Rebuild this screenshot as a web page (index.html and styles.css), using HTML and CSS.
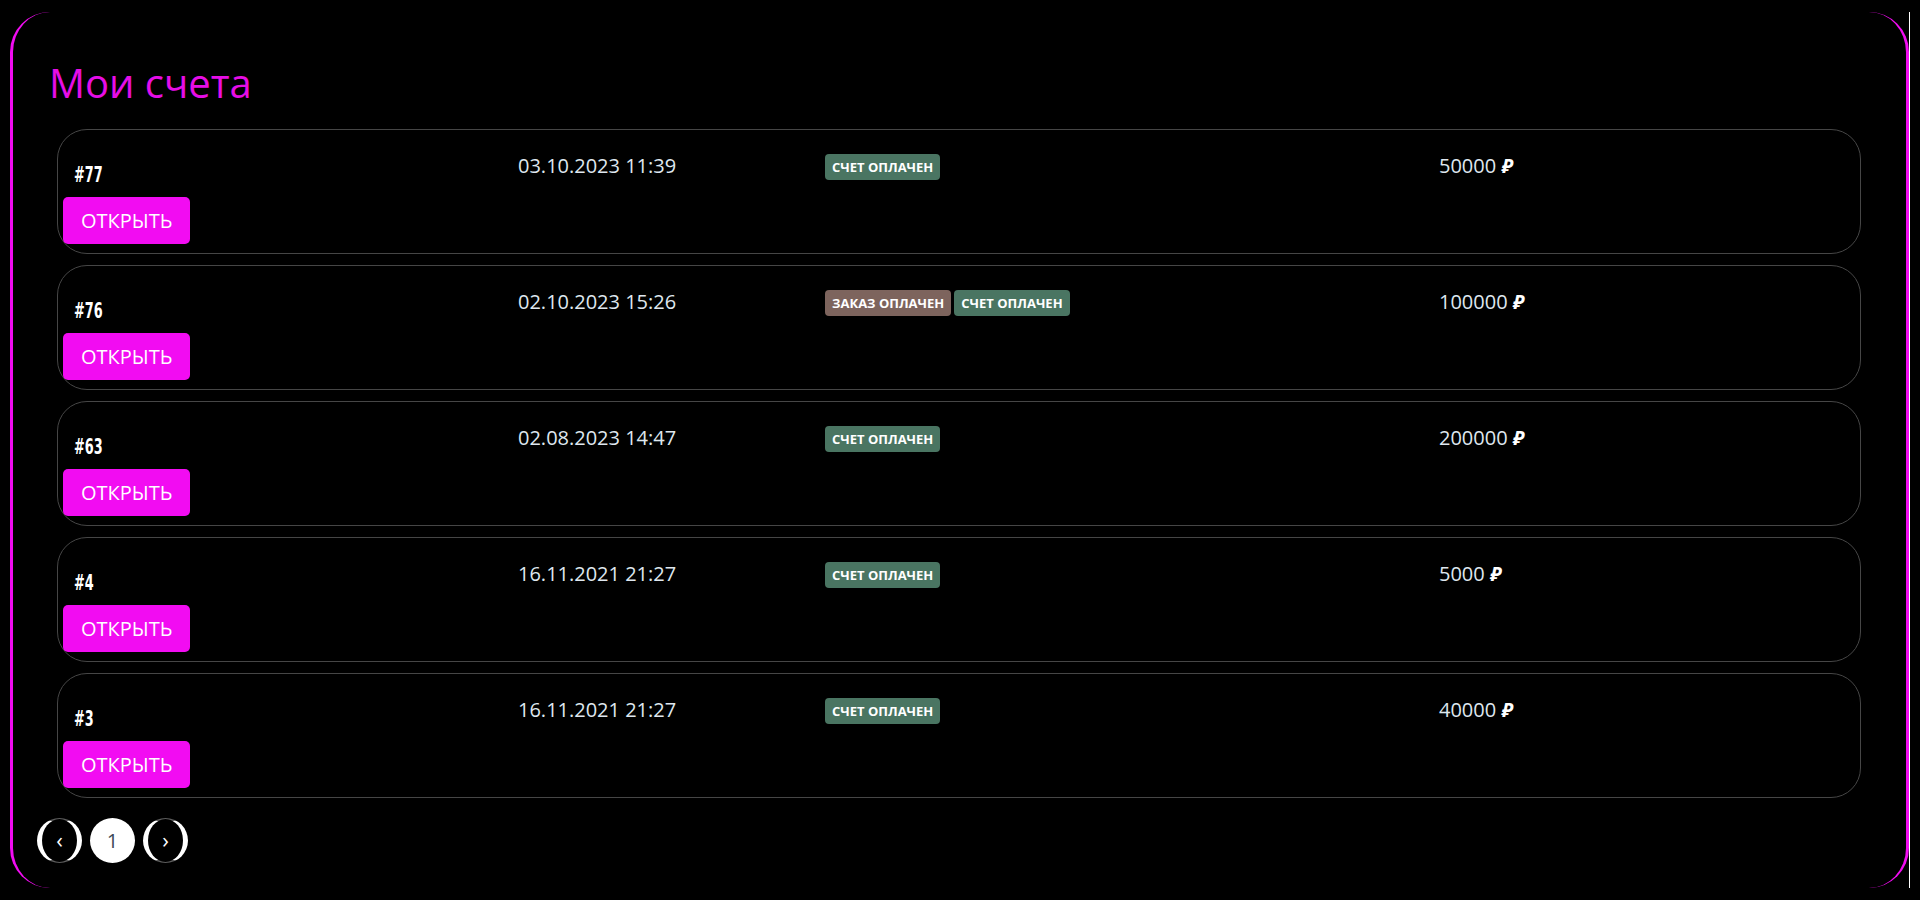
FILE: index.html
```html
<!DOCTYPE html>
<html lang="ru">
<head>
<meta charset="utf-8">
<title>Мои счета</title>
<link rel="stylesheet" href="styles.css">
</head>
<body>
<div class="frame">
  <section class="panel">
    <h1 class="title">Мои счета</h1>
    <div class="list">
      <div class="card">
        <div class="col-id"><div class="num">#77</div><a class="btn-open" href="#">ОТКРЫТЬ</a></div>
        <div class="col-date">03.10.2023 11:39</div>
        <div class="col-badges"><span class="badge badge-green">СЧЕТ ОПЛАЧЕН</span></div>
        <div class="col-sum">50000 <span class="rub">₽</span></div>
      </div>
      <div class="card">
        <div class="col-id"><div class="num">#76</div><a class="btn-open" href="#">ОТКРЫТЬ</a></div>
        <div class="col-date">02.10.2023 15:26</div>
        <div class="col-badges"><span class="badge badge-brown">ЗАКАЗ ОПЛАЧЕН</span><span class="badge badge-green">СЧЕТ ОПЛАЧЕН</span></div>
        <div class="col-sum">100000 <span class="rub">₽</span></div>
      </div>
      <div class="card">
        <div class="col-id"><div class="num">#63</div><a class="btn-open" href="#">ОТКРЫТЬ</a></div>
        <div class="col-date">02.08.2023 14:47</div>
        <div class="col-badges"><span class="badge badge-green">СЧЕТ ОПЛАЧЕН</span></div>
        <div class="col-sum">200000 <span class="rub">₽</span></div>
      </div>
      <div class="card">
        <div class="col-id"><div class="num">#4</div><a class="btn-open" href="#">ОТКРЫТЬ</a></div>
        <div class="col-date">16.11.2021 21:27</div>
        <div class="col-badges"><span class="badge badge-green">СЧЕТ ОПЛАЧЕН</span></div>
        <div class="col-sum">5000 <span class="rub">₽</span></div>
      </div>
      <div class="card">
        <div class="col-id"><div class="num">#3</div><a class="btn-open" href="#">ОТКРЫТЬ</a></div>
        <div class="col-date">16.11.2021 21:27</div>
        <div class="col-badges"><span class="badge badge-green">СЧЕТ ОПЛАЧЕН</span></div>
        <div class="col-sum">40000 <span class="rub">₽</span></div>
      </div>
    </div>
    <nav class="pager">
      <a class="page page-arrow" href="#">‹</a>
      <a class="page page-current" href="#">1</a>
      <a class="page page-arrow" href="#">›</a>
    </nav>
  </section>
</div>
</body>
</html>
```
FILE: styles.css
```css
html, body {
  margin: 0;
  padding: 0;
  background: #000;
}
body {
  font-family: "Open Sans", "Noto Sans", sans-serif;
  color: #fff;
}
.frame {
  margin: 12px 10px;
  border-right: 1px solid #fff;
}
.panel {
  border-style: solid;
  border-color: #f20cf2;
  border-width: 0 3px;
  border-radius: 40px;
  padding: 24px 24px 25px 24px;
}
.title {
  font-family: "Open Sans", sans-serif;
  font-weight: 400;
  font-size: 40px;
  line-height: 48px;
  color: #e60ee6;
  margin: 23px 0 22px 12px;
}
.list {
  display: flex;
  flex-direction: column;
  gap: 11px;
  margin: 0 21px 0 20px;
}
.card {
  display: grid;
  grid-template-columns: 455fr 307fr 614fr 416fr;
  border: 1px solid #464646;
  border-radius: 30px;
  padding: 21px 5px 9px 5px;
}
.col-id {
  display: flex;
  flex-direction: column;
  align-items: flex-start;
}
.num {
  font-family: "DejaVu Sans Condensed", "DejaVu Sans", sans-serif;
  font-stretch: condensed;
  font-weight: 700;
  font-size: 21px;
  line-height: 24px;
  height: 24px;
  margin: 12px 0 10px 11px;
  color: #fff;
  transform: scaleX(0.68);
  transform-origin: left center;
}
.btn-open {
  display: block;
  height: 47px;
  line-height: 47px;
  padding: 0 18px;
  background: #f20cf2;
  color: #fff;
  border-radius: 5px;
  font-size: 20px;
  text-decoration: none;
}
.col-date, .col-sum {
  font-size: 20px;
  line-height: 30px;
  color: #dfe7ef;
}
.col-badges {
  display: flex;
  gap: 3px;
  align-items: flex-start;
  padding-top: 3px;
  align-self: start;
}
.badge {
  display: block;
  height: 26px;
  line-height: 26px;
  padding: 0 7px;
  border-radius: 4px;
  font-size: 13px;
  font-weight: 700;
  color: #fff;
}
.badge-green { background: #4a7562; }
.badge-brown { background: #7d645d; }
.rub {
  font-weight: 700;
  font-style: italic;
  color: #fff;
}
.pager {
  display: flex;
  gap: 8px;
  margin-top: 20px;
}
.page {
  box-sizing: border-box;
  width: 45px;
  height: 45px;
  border-radius: 50%;
  display: flex;
  align-items: center;
  justify-content: center;
  text-decoration: none;
  font-size: 20px;
}
.page-arrow {
  border-style: solid;
  border-width: 1px 5px;
  border-color: #5a5a5a #fff;
  color: #fff;
  font-size: 22px;
  line-height: 1;
  padding-bottom: 3px;
}
.page-current {
  background: #fff;
  color: #3c4a58;
}
```
